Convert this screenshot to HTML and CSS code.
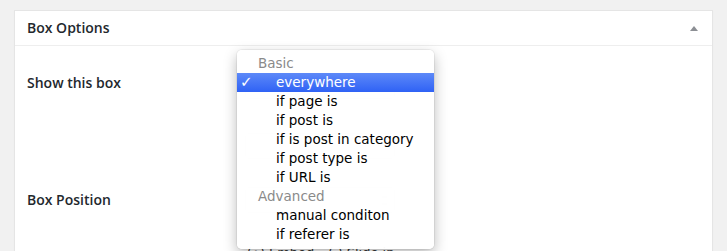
FILE: index.html
```html
<!DOCTYPE html>
<html lang="en">
<head>
    <meta charset="UTF-8">
    <title>Box Options</title>
    <link rel="stylesheet" href="styles.css">
</head>
<body>
    <div class="postbox">
        <div class="postbox-header">
            <h2>Box Options</h2>
            <span class="toggle-arrow"></span>
        </div>

        <div class="inside">
            <div class="form-row row-show">
                <div class="form-label">Show this box</div>
                <div class="form-field">
                    <div class="select-box"></div>
                    <div class="select-box second"></div>
                </div>
            </div>

            <div class="form-row row-position">
                <div class="form-label">Box Position</div>
                <div class="form-field">
                    <div class="select-box"><span class="updown"></span></div>
                    <div class="radios">
                        <span class="radio">(•) Embed</span>
                        <span class="radio">( ) Slide in</span>
                    </div>
                </div>
            </div>
        </div>

        <!-- open select menu -->
        <div class="popup-menu">
            <div class="menu-group">Basic</div>
            <div class="menu-item selected"><span class="check">✓</span>everywhere</div>
            <div class="menu-item">if page is</div>
            <div class="menu-item">if post is</div>
            <div class="menu-item">if is post in category</div>
            <div class="menu-item">if post type is</div>
            <div class="menu-item">if URL is</div>
            <div class="menu-group">Advanced</div>
            <div class="menu-item">manual conditon</div>
            <div class="menu-item">if referer is</div>
        </div>
    </div>
</body>
</html>
```

FILE: styles.css
```css
* {
    box-sizing: border-box;
}

body {
    margin: 0;
    background: #f1f1f1;
    font-family: 'Open Sans', sans-serif;
    color: #23282d;
    height: 251px;
    overflow: hidden;
}

/* Panel */
.postbox {
    position: relative;
    margin: 10px 14px 0 14px;
    width: 699px;
    height: 241px;
    background: #fff;
    border: 1px solid #e5e5e5;
    border-bottom: none;
    box-shadow: 0 1px 1px rgba(0, 0, 0, 0.04);
}

.postbox-header {
    height: 35px;
    border-bottom: 1px solid #eee;
    display: flex;
    align-items: center;
    justify-content: space-between;
    padding: 0 14px 0 12px;
}

.postbox-header h2 {
    margin: 0;
    font-size: 14px;
    font-weight: 600;
    line-height: 20px;
}

.toggle-arrow {
    width: 0;
    height: 0;
    border-left: 4px solid transparent;
    border-right: 4px solid transparent;
    border-bottom: 5px solid #8c8f94;
}

/* Form rows */
.inside {
    padding: 0 12px;
}

.form-row {
    display: flex;
}

.row-show {
    padding-top: 27px;
    height: 125px;
}

.form-label {
    width: 218px;
    font-size: 14px;
    font-weight: 600;
    line-height: 20px;
}

.form-field {
    display: flex;
    flex-direction: column;
}

.select-box {
    width: 150px;
    height: 26px;
    border: 1px solid #e2e2e2;
    border-radius: 3px;
    position: relative;
}

.select-box.second {
    margin-top: 34px;
}

.row-position .form-label {
    margin-top: 19px;
}

.row-position .select-box {
    margin-top: 16px;
}

.updown {
    position: absolute;
    right: 7px;
    top: 8px;
    width: 5px;
    height: 9px;
    border-top: 2px solid #ccc;
    border-bottom: 2px solid #ccc;
}

.radios {
    margin-top: 32px;
    display: flex;
    gap: 14px;
    font-family: 'DejaVu Sans', sans-serif;
    font-size: 13px;
    line-height: 16px;
    color: #333;
    padding-left: 2px;
}

/* Popup menu */
.popup-menu {
    position: absolute;
    left: 222px;
    top: 39px;
    width: 197px;
    padding: 4px 0 5px 0;
    background: rgba(255, 255, 255, 0.97);
    border-radius: 5px;
    box-shadow: 0 0 0 1px rgba(0, 0, 0, 0.05), 0 5px 14px rgba(0, 0, 0, 0.28);
    font-family: 'DejaVu Sans', sans-serif;
    font-size: 13.5px;
}

.menu-group,
.menu-item {
    height: 19px;
    line-height: 19px;
    white-space: nowrap;
}

.menu-group {
    padding-left: 21px;
    color: #8a8a8a;
}

.menu-item {
    padding-left: 39px;
    color: #000;
    position: relative;
}

.menu-item.selected {
    background: linear-gradient(#5d89f8, #2f62f5);
    color: #fff;
}

.check {
    position: absolute;
    left: 3px;
    top: 0;
    font-size: 15px;
    font-weight: bold;
}
```
